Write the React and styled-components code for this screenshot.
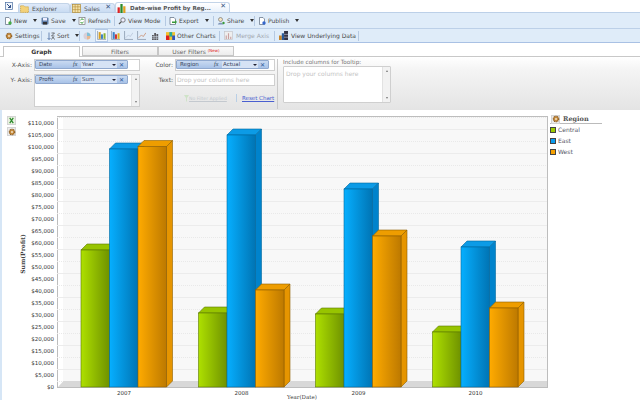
import React from "react";
import styled, { createGlobalStyle } from "styled-components";

const Global = createGlobalStyle`
  html, body { margin: 0; padding: 0; background: #fff; }
  body { font-family: "DejaVu Sans", Verdana, sans-serif; font-size: 6px; color: #444; }
  * { box-sizing: border-box; }
`;

const Page = styled.div`
  width: 640px; height: 400px; overflow: hidden; display: flex; flex-direction: column; background: #fff;
`;

/* ---------- top tabs ---------- */
const TabStrip = styled.div`
  height: 12px; display: flex; align-items: flex-end; padding-left: 5px; position: relative; z-index: 1;
`;
const HomeSlot = styled.div`
  width: 13px; height: 12px; display: flex; align-items: flex-start; padding-top: 2px;
`;
const DocTab = styled.div`
  width: ${p => p.$w}px; height: ${p => (p.$active ? 10 : 9)}px; display: flex; align-items: center; gap: ${p => (p.$active ? 4 : 3)}px; padding: 1px 0 0 1px;
  border: 1px solid #c3d4e8; border-bottom: 0; border-radius: 3px 3px 0 0;
  background: ${p => (p.$active ? "linear-gradient(#fff,#e9f1fb)" : "linear-gradient(#dfeafa,#c9dcf2)")};
  font-weight: ${p => (p.$active ? 700 : 400)};
  font-size: ${p => (p.$active ? 5.6 : 6)}px; color: #555; white-space: nowrap; position: relative;
`;
const TabClose = styled.span`
  position: absolute; right: 3px; top: -1px; font-size: 7px; color: #3b5a85; font-weight: 700;
`;

/* ---------- toolbars ---------- */
const ToolRow = styled.div`
  height: ${p => p.$h}px; flex: none; display: flex; align-items: center; background: #dfecf9; padding-left: ${p => p.$pad}px;
  border-top: 1px solid #bcd0e8; border-bottom: ${p => (p.$last ? "1px solid #a9c1e4" : "0")};
`;
const ToolButton = styled.div`
  width: ${p => p.$w}px; height: 13px; flex: none; display: flex; align-items: center; gap: ${p => p.$gap ?? 2}px; white-space: nowrap;
  padding-left: ${p => p.$pl || 0}px;
  color: ${p => (p.$off ? "#a3a9b0" : "#4a4a4a")};
  ${p => p.$on && "background:#f1f6fc;border:1px solid #b6cbe6;"}
  justify-content: ${p => (p.$center ? "center" : "flex-start")};
`;
const Caret = styled.span`
  width: 0; height: 0; margin-left: 4px; border: 2px solid transparent; border-top: 3px solid #333; border-bottom: 0;
`;
const ToolSep = styled.div`
  width: 1px; height: 10px; flex: none; background: #b5c9e2; margin: 0 3px;
`;

/* ---------- sub tabs + panel ---------- */
const Spacer = styled.div` height: 3px; flex: none; `;
const SubTabs = styled.div`
  height: 10px; flex: none; display: flex; padding-left: 3px; position: relative; z-index: 1;
`;
const SubTab = styled.div`
  width: ${p => p.$w}px; margin-left: ${p => p.$ml || 0}px; height: ${p => (p.$active ? 11 : 10)}px; text-align: center; line-height: 9px;
  border: 1px solid #c6c6c6; border-bottom: ${p => (p.$active ? 0 : "1px solid #c6c6c6")};
  background: ${p => (p.$active ? "#fff" : "linear-gradient(#fafafa,#ececec)")};
  font-weight: ${p => (p.$active ? 700 : 400)}; color: ${p => (p.$active ? "#333" : "#666")}; white-space: nowrap;
`;
const NewMark = styled.sup`
  font-size: 4px; color: #d22; line-height: 0; vertical-align: 2px;
`;
const Panel = styled.div`
  height: 54px; flex: none; display: flex; padding: 2px 0 0 0; border-top: 1px solid #c8c8c8;
  background: linear-gradient(#fff,#f4f4f4 25%,#e4e4e4);
`;
const FormGrid = styled.div`
  display: grid; grid-template-columns: ${p => p.$label}px ${p => p.$field}px; grid-auto-rows: min-content;
  row-gap: 3px; margin-left: ${p => p.$ml || 0}px;
`;
const FieldLabel = styled.div`
  text-align: right; padding-right: 2px; line-height: 12px; color: #555; white-space: nowrap;
`;
const Field = styled.div`
  height: ${p => p.$h || 12}px; background: #fff; border: 1px solid #cfcfcf; position: relative; padding: 0 1px;
  color: #c4c4c4; line-height: 10px; white-space: nowrap; font-size: 6px;
`;
const ChipField = styled(Field)`
  padding: 0;
`;
const Scrollbar = styled.div`
  position: absolute; top: 0; right: 0; bottom: 0; width: 8px; background: #f2f2f2; border-left: 1px solid #e2e2e2;
  display: flex; flex-direction: column; justify-content: space-between; align-items: center; padding: 3px 0;
  &::before, &::after { content: ""; width: 0; height: 0; border: 1.5px solid transparent; }
  &::before { border-bottom: 2px solid #777; border-top: 0; }
  &::after { border-top: 2px solid #777; border-bottom: 0; }
`;
const Chip = styled.div`
  width: 93px; height: 9px; display: flex; align-items: center; border: 1px solid #90a9cf; border-radius: 1px;
  background: linear-gradient(#c9daf1,#a9c3e8); color: #3a4660; font-size: 5.5px; line-height: 7px; padding-left: 3px;
`;
const ChipName = styled.span` width: 34px; `;
const Fx = styled.span`
  width: 8px; font-family: "Liberation Serif", serif; font-style: italic; font-size: 6px; color: #345;
`;
const ChipSelect = styled.div`
  width: 36px; height: 7px; display: flex; align-items: center; justify-content: space-between; padding: 0 1px 0 1px;
  background: #d6e3f5;
`;
const MiniCaret = styled.span`
  width: 0; height: 0; border: 2px solid transparent; border-top: 2px solid #223; border-bottom: 0;
`;
const ChipX = styled.span`
  margin-left: 2px; color: #2f5a9a; font-weight: 700; font-size: 6px; line-height: 7px;
`;
const StatusRow = styled.div`
  grid-column: 1 / 3; display: flex; align-items: center; margin-top: 5px; padding-left: 34px; font-size: 5.5px; white-space: nowrap;
`;
const FunnelSlot = styled.span` width: 5px; height: 7px; flex: none; display: flex; `;
const Muted = styled.span`
  width: 47px; font-size: 4.6px; color: #c4c9cf; text-decoration: underline;
`;
const ResetLink = styled.a`
  color: #4a5fd0; text-decoration: underline; padding-left: 5px; border-left: 1px solid #b9cfe6; line-height: 8px;
`;
const TooltipCol = styled.div`
  margin-left: 2px; padding-left: 5px; border-left: 1px solid #c9c9c9; height: 50px; color: #777;
`;
const TipLabel = styled.div` line-height: 7px; font-size: 5.700px; `;
const TipBox = styled.div`
  width: 108px; height: 37px; background: #fff; border: 1px solid #cfcfcf; border-radius: 1px; position: relative;
  color: #c4c4c4; padding: 2px; line-height: 9px;
`;

/* ---------- chart area ---------- */
const ChartArea = styled.div`
  flex: 1; display: flex; min-height: 0; border-left: 2px solid #d6e6f6;
`;
const Rail = styled.div`
  width: 14px; flex: none; padding: 6px 0 0 5px; display: flex; flex-direction: column; gap: 2px;
`;
const RailButton = styled.div`
  width: 9px; height: 9px; flex: none; display: flex; align-items: center; justify-content: center; background: #ececec; border: 1px solid #d4d4d4;
`;
const ChartSvg = styled.svg`
  width: 534px; height: 290px; flex: none; display: block;
  text { font-family: "DejaVu Sans", Verdana, sans-serif; }
`;
const Legend = styled.div`
  flex: 1; padding: 5px 0 0 0; color: #444;
`;
const LegendHead = styled.div`
  width: 52px; height: 9px; padding-left: 1px; display: flex; align-items: center; gap: 3px; border-bottom: 1px solid #bbb;
  font-family: "DejaVu Serif", "Liberation Serif", serif; font-weight: 700; font-size: 6.500px; color: #555;
`;
const LegendItem = styled.div`
  height: 11px; display: flex; align-items: center; gap: 2px; color: #556;
`;
const Swatch = styled.span`
  width: 6px; height: 6px; background: ${p => p.$c}; border: 1px solid #444;
`;

/* ---------- icons ---------- */
const Ico = ({ children, s = 8 }) => (
  <svg width={s} height={s} viewBox="0 0 8 8" style={{ flex: "none" }}>{children}</svg>
);
const Doc = ({ badge = "#4a4" }) => (
  <Ico><path d="M1.500.5h3.500l1.500 1.500v5.500h-5z" fill="#fff" stroke="#5b6b7f" strokeWidth=".7" /><circle cx="6" cy="6" r="1.700" fill={badge} /></Ico>
);
const Floppy = () => (
  <Ico><rect x=".5" y=".5" width="7" height="7" rx="1" fill="#5f7ea8" /><rect x="2" y="1" width="4" height="2.500" fill="#eef" /><rect x="2" y="5" width="4" height="2.500" fill="#333" /></Ico>
);
const Refresh = () => (
  <Ico><rect x="1" y=".5" width="6" height="7" fill="#fff" stroke="#666" strokeWidth=".6" /><path d="M2.500 3a2 2 0 013-.5M5.500 5a2 2 0 01-3 .5" fill="none" stroke="#2a9a2a" strokeWidth="1" /></Ico>
);
const Lens = () => (
  <Ico><circle cx="5" cy="3" r="2.200" fill="#eef" stroke="#666" strokeWidth=".8" /><path d="M3.400 4.600L1 7" stroke="#555" strokeWidth="1.200" /></Ico>
);
const Export = () => (
  <Ico><path d="M1 .5h4l1.500 1.500v5.500H1z" fill="#fff" stroke="#5b6b7f" strokeWidth=".7" /><path d="M3 4.500h3V3l2 2-2 2V6H3z" fill="#3a9a3a" /></Ico>
);
const Share = () => (
  <Ico><circle cx="3.500" cy="2.500" r="2" fill="#f5e3c0" stroke="#666" strokeWidth=".6" /><path d="M.8 7.500c.4-2.200 5-2.200 5.400 0z" fill="#7c93b8" /><circle cx="6.500" cy="6" r="1.200" fill="#3a9a3a" /></Ico>
);
const Gear = () => (
  <Ico><circle cx="4" cy="4" r="2.700" fill="#c58b3c" stroke="#8a5a20" strokeWidth="1.200" strokeDasharray="1 .7" /><circle cx="4" cy="4" r="1" fill="#efe0c8" /></Ico>
);
const SortIco = () => (
  <Ico><path d="M2 .5v7M.5 6l1.500 1.500L3.500 6" fill="none" stroke="#3a5f9a" strokeWidth=".7" /><path d="M4.500 1h3L4.500 4h3M4.500 7.500L6 5l1.500 2.500" fill="none" stroke="#444" strokeWidth=".7" /></Ico>
);
const Pie = () => (
  <Ico><circle cx="4" cy="4" r="3.500" fill="#d8d0d8" /><path d="M4 4V.5A3.500 3.500 0 017.500 4z" fill="#7fc0d8" /><path d="M4 4h3.500A3.500 3.500 0 014 7.500z" fill="#e8b890" /></Ico>
);
const Bars = ({ c = ["#d8a020", "#3a80c8", "#8ab030"] }) => (
  <Ico s={9}>
    <path d="M.5 0v7.500H8" fill="none" stroke="#7a8aa0" strokeWidth=".6" />
    <rect x="1.500" y="1" width="1.800" height="6" fill={c[0]} /><rect x="3.500" y="3" width="1.800" height="4" fill={c[1]} /><rect x="5.800" y="2" width="1.800" height="5" fill={c[2]} />
  </Ico>
);
const Lines = ({ c = "#7a9ac8" }) => (
  <Ico s={9}><path d="M.5 0v7.500H8.500" fill="none" stroke="#7a8aa0" strokeWidth=".6" /><path d="M1.500 6L4 3.500 5.500 5 8 1.500" fill="none" stroke={c} strokeWidth=".7" /></Ico>
);
const Grid = () => (
  <Ico><path d="M1 3h1.800v5H1zM3.200 1H5v7H3.200zM5.400 2h1.800v6H5.400z" fill="#5a5a60" /><path d="M1 4.500h6.200M1 6.200h6.200" stroke="#dfecf9" strokeWidth=".5" /></Ico>
);
const Other = () => (
  <Ico s={9}><rect x="0" y="1" width="8" height="7" fill="#f2c230" /><rect x="0" y="4" width="3" height="4" fill="#d22" /><rect x="3" y="1" width="2.500" height="4" fill="#2a9" /><rect x="5.500" y="4" width="2.500" height="4" fill="#35b" /></Ico>
);
const Merge = () => (
  <Ico s={9}><rect x=".5" y=".5" width="7" height="7" fill="#eee" stroke="#c4c4c8" strokeWidth=".6" /><path d="M2 7V4M4 7V2M6 7V5" stroke="#c9a0a0" strokeWidth="1" /></Ico>
);
const Table = () => (
  <Ico s={9}><rect x="0" y="4" width="2.500" height="4" fill="#c8862a" /><rect x="2.500" y="2" width="2" height="6" fill="#2a5a9a" /><rect x="4.500" y="0" width="3.500" height="8" fill="#334" /><path d="M4.500 3h3.500M4.500 5.500h3.500" stroke="#bbc" strokeWidth=".6" /></Ico>
);
const Home = () => (
  <Ico><rect x=".5" y=".5" width="7" height="7" fill="#eef4fb" stroke="#4a6ea0" strokeWidth=".7" /><path d="M2 2l3.500 3.500M5.500 3v2.500H3" fill="none" stroke="#1f3f7a" strokeWidth=".9" /></Ico>
);
const Folder = () => (
  <Ico s={9}><path d="M.5 1.500h3l1 1h3v5h-7z" fill="#f3d27a" stroke="#c89a2a" strokeWidth=".6" strokeDasharray="1 .6" /></Ico>
);
const Sheet = () => (
  <Ico s={9}><rect x=".5" y=".5" width="7" height="7" fill="#f5e2a8" stroke="#b08a30" strokeWidth=".6" /><path d="M.5 2.500h7M2.800 .5v7M5.200 .5v7M.5 5h7" stroke="#b08a30" strokeWidth=".5" /></Ico>
);
const ChartTabIco = () => (
  <Ico s={9}><rect x=".5" y="3" width="2" height="5" fill="#d22" /><rect x="3" y="0" width="2" height="8" fill="#2a8a2a" /><rect x="5.500" y="2" width="2" height="6" fill="#e0a020" /></Ico>
);
const Excel = () => (
  <Ico s={7}><rect width="8" height="8" fill="#e8f0e0" /><path d="M2 1l4 6M6 1L2 7" stroke="#2a8a2a" strokeWidth="1.400" /></Ico>
);
const Funnel = () => (
  <svg width="5" height="7" viewBox="0 0 5 7"><path d="M0 0h5L3 3v4L2 6V3z" fill="#cfe3c8" /></svg>
);

/* ---------- chart data ---------- */
const SERIES = {
  Central: { grad: "gC", top: "#97c400", side: "#7a9c00", edge: "#5c7a00" },
  East: { grad: "gE", top: "#0c9be6", side: "#0083cc", edge: "#00689f" },
  West: { grad: "gW", top: "#ee9d00", side: "#e69500", edge: "#8f5f00" },
};
const GROUPS = [
  { year: "2007", x: 81, tops: [250, 149, 146.500] },
  { year: "2008", x: 198.500, tops: [313, 135, 290] },
  { year: "2009", x: 315.500, tops: [314, 189, 236] },
  { year: "2010", x: 432.500, tops: [332, 247, 308] },
];
const BASE = 387;
const BW = 28.500;
const D = 6;
const ticks = Array.from({ length: 23 }, (_, i) => i * 5000);
const money = v => "$" + v.toLocaleString("en-US");

function Bar({ x, top, s }) {
  const c = SERIES[s];
  return (
    <g stroke={c.edge} strokeWidth=".6">
      <polygon points={`${x},${top} ${x + D},${top - D} ${x + BW + D},${top - D} ${x + BW},${top}`} fill={c.top} />
      <polygon points={`${x + BW},${top} ${x + BW + D},${top - D} ${x + BW + D},${BASE - D} ${x + BW},${BASE}`} fill={c.side} />
      <rect x={x} y={top} width={BW} height={BASE - top} fill={`url(#${c.grad})`} />
    </g>
  );
}

function Chart() {
  return (
    <ChartSvg viewBox="16 110 534 290">
      <defs>
        <linearGradient id="gC"><stop offset="0" stopColor="#aee000" /><stop offset="1" stopColor="#6f9200" /></linearGradient>
        <linearGradient id="gE"><stop offset="0" stopColor="#06afff" /><stop offset="1" stopColor="#0074b4" /></linearGradient>
        <linearGradient id="gW"><stop offset="0" stopColor="#ffab00" /><stop offset="1" stopColor="#bd7900" /></linearGradient>
      </defs>
      <rect x="57.500" y="116.500" width="490" height="271" fill="#fff" stroke="#bdbdbd" />
      <rect x="63" y="117" width="484" height="264" fill="#f8f8f8" />
      {ticks.map((v, i) => (
        <line key={v} x1="57" x2="547" y1={BASE - i * 12 - 6 + 0.500} y2={BASE - i * 12 - 6 + 0.500} stroke={i % 2 ? "#ececec" : "#e9e9e9"} strokeDasharray={i % 2 ? "none" : "1 1"} />
      ))}
      <polygon points="58,387 63.500,381 547,381 547,387" fill="#d8d8d8" />
      {ticks.map((v, i) => (
        <text key={v} x="54" y={BASE - i * 12 + 2} fontSize="5.500" textAnchor="end" fill="#333">{money(v)}</text>
      ))}
      <text transform="translate(25 254) rotate(-90)" fontSize="6" fontWeight="700" textAnchor="middle" fill="#444" style={{ fontFamily: '"DejaVu Serif", serif' }}>Sum(Profit)</text>
      {GROUPS.map(g => (
        <g key={g.year}>
          <Bar x={g.x} top={g.tops[0]} s="Central" />
          <Bar x={g.x + BW} top={g.tops[1]} s="East" />
          <Bar x={g.x + 2 * BW} top={g.tops[2]} s="West" />
          <text x={g.x + 43} y="395" fontSize="5.500" textAnchor="middle" fill="#333">{g.year}</text>
        </g>
      ))}
      <text x="302" y="398.500" fontSize="5.500" textAnchor="middle" fill="#444" style={{ fontFamily: '"DejaVu Serif", serif' }}>Year(Date)</text>
    </ChartSvg>
  );
}

function ColumnChip({ name, agg }) {
  return (
    <Chip>
      <ChipName>{name}</ChipName>
      <Fx>fx</Fx>
      <ChipSelect>{agg}<MiniCaret /></ChipSelect>
      <ChipX>✕</ChipX>
    </Chip>
  );
}

export default function App() {
  return (
    <Page>
      <Global />
      <TabStrip>
        <HomeSlot><Home /></HomeSlot>
        <DocTab $w={52}><Folder />Explorer</DocTab>
        <DocTab $w={45}><Sheet />Sales<TabClose>✕</TabClose></DocTab>
        <DocTab $w={115} $active><ChartTabIco />Date-wise Profit by Reg...<TabClose>✕</TabClose></DocTab>
      </TabStrip>

      <ToolRow $h={16} $pad={4}>
        <ToolButton $w={37}><Doc />New<Caret /></ToolButton>
        <ToolButton $w={37}><Floppy />Save<Caret /></ToolButton>
        <ToolButton $w={33}><Refresh />Refresh</ToolButton>
        <ToolSep />
        <ToolButton $w={44}><Lens />View Mode</ToolButton>
        <ToolSep />
        <ToolButton $w={41}><Export />Export<Caret /></ToolButton>
        <ToolSep />
        <ToolButton $w={34}><Share />Share<Caret /></ToolButton>
        <ToolSep />
        <ToolButton $w={40}><Doc badge="#36c" />Publish<Caret /></ToolButton>
      </ToolRow>

      <ToolRow $h={15} $pad={5} $last>
        <ToolButton $w={33}><Gear />Settings</ToolButton>
        <ToolSep />
        <ToolButton $w={31} $pl={2}><SortIco />Sort<Caret /></ToolButton>
        <ToolSep />
        <ToolButton $w={12}><Pie /></ToolButton>
        <ToolButton $w={13} $on $center><Bars /></ToolButton>
        <ToolButton $w={14} $center><Bars c={["#3a80c8", "#d03030", "#e0b020"]} /></ToolButton>
        <ToolButton $w={13} $center><Lines c="#b8c4d8" /></ToolButton>
        <ToolButton $w={13} $center><Lines c="#c88a6a" /></ToolButton>
        <ToolButton $w={14} $center><Grid /></ToolButton>
        <ToolButton $w={54} $pl={4}><Other />Other Charts</ToolButton>
        <ToolSep />
        <ToolButton $w={48} $off $pl={1} $gap={3}><Merge />Merge Axis</ToolButton>
        <ToolSep />
        <ToolButton $w={77} $pl={1} $gap={3}><Table />View Underlying Data</ToolButton>
        <ToolSep />
      </ToolRow>

      <Spacer />
      <SubTabs>
        <SubTab $w={77} $active>Graph</SubTab>
        <SubTab $w={76} $ml={2}>Filters</SubTab>
        <SubTab $w={76}>User Filters <NewMark>(New)</NewMark></SubTab>
      </SubTabs>

      <Panel>
        <FormGrid $label={34} $field={106}>
          <FieldLabel>X-Axis:</FieldLabel>
          <ChipField><ColumnChip name="Date" agg="Year" /></ChipField>
          <FieldLabel>Y- Axis:</FieldLabel>
          <ChipField $h={33}><ColumnChip name="Profit" agg="Sum" /><Scrollbar /></ChipField>
        </FormGrid>
        <FormGrid $label={25} $field={100} $ml={10}>
          <FieldLabel>Color:</FieldLabel>
          <ChipField><ColumnChip name="Region" agg="Actual" /></ChipField>
          <FieldLabel>Text:</FieldLabel>
          <Field>Drop your columns here</Field>
          <StatusRow>
            <FunnelSlot><Funnel /></FunnelSlot>
            <Muted>No Filter Applied</Muted>
            <ResetLink href="#">Reset Chart</ResetLink>
          </StatusRow>
        </FormGrid>
        <TooltipCol>
          <TipLabel>Include columns for Tooltip:</TipLabel>
          <TipBox>Drop your columns here<Scrollbar /></TipBox>
        </TooltipCol>
      </Panel>

      <ChartArea>
        <Rail>
          <RailButton><Excel /></RailButton>
          <RailButton><Gear /></RailButton>
        </Rail>
        <Chart />
        <Legend>
          <LegendHead><RailButton><Gear /></RailButton>Region</LegendHead>
          <LegendItem><Swatch $c="#9ccc00" />Central</LegendItem>
          <LegendItem><Swatch $c="#0a9cf0" />East</LegendItem>
          <LegendItem><Swatch $c="#f5a000" />West</LegendItem>
        </Legend>
      </ChartArea>
    </Page>
  );
}
